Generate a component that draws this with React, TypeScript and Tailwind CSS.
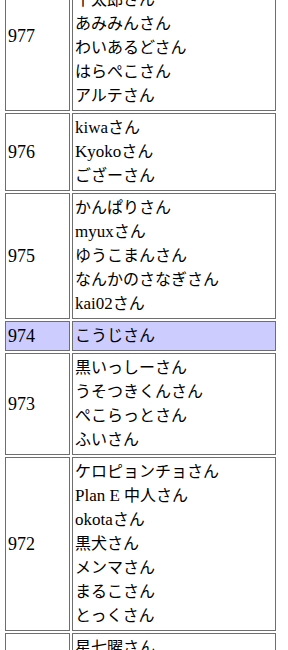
const ROWS: { no: number; names: string[]; hl?: boolean }[] = [
  {
    no: 977,
    names: ["ぽんたさん", "千太郎さん", "あみみんさん", "わいあるどさん", "はらぺこさん", "アルテさん"],
  },
  { no: 976, names: ["kiwaさん", "Kyokoさん", "ござーさん"] },
  {
    no: 975,
    names: ["かんぱりさん", "myuxさん", "ゆうこまんさん", "なんかのさなぎさん", "kai02さん"],
  },
  { no: 974, names: ["こうじさん"], hl: true },
  { no: 973, names: ["黒いっしーさん", "うそつきくんさん", "ぺこらっとさん", "ふいさん"] },
  {
    no: 972,
    names: [
      "ケロピョンチョさん",
      "Plan E 中人さん",
      "okotaさん",
      "黒犬さん",
      "メンマさん",
      "まるこさん",
      "とっくさん",
    ],
  },
  { no: 971, names: ["星七曜さん", "みーさん", "たまさん"] },
];

// latin runs render a bit larger than the kana in the original
function Name({ text }: { text: string }) {
  const parts = text.split(/([A-Za-z0-9 ]+)/).filter(Boolean);
  return (
    <div>
      {parts.map((p, i) =>
        /^[A-Za-z0-9 ]+$/.test(p) ? (
          <span key={i} className="text-[17px]">
            {p}
          </span>
        ) : (
          <span key={i}>{p}</span>
        )
      )}
    </div>
  );
}

export default function App() {
  return (
    <div className="h-[650px] w-[288px] overflow-hidden bg-white text-black">
      <table
        className="ml-[3px] mt-[-41px] w-[275px] table-fixed border-separate border-spacing-[2px] text-[16px] leading-[24px]"
        style={{ fontFamily: '"Liberation Serif", "Noto Sans CJK JP", serif' }}
      >
        <tbody>
          {ROWS.map((r) => (
            <tr key={r.no} className={r.hl ? "bg-[#ccccff]" : ""}>
              <td className="w-[65px] border border-[#6e6e6e] p-[2px] align-middle text-[18px]">
                {r.no}
              </td>
              <td className="border border-[#6e6e6e] p-[2px] align-middle">
                {r.names.map((n, i) => (
                  <Name key={i} text={n} />
                ))}
              </td>
            </tr>
          ))}
        </tbody>
      </table>
    </div>
  );
}
